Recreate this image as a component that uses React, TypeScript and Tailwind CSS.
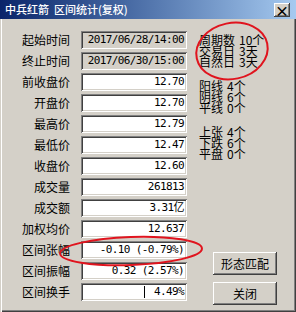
import React from "react";

const cjk = { fontFamily: '"Noto Sans CJK SC", "Noto Sans", sans-serif' };
const mono = { fontFamily: '"DejaVu Sans Mono", "Noto Sans CJK SC", monospace' };

const rows: { label: string; value: string; grey?: boolean; cursor?: boolean }[] = [
  { label: "起始时间", value: "2017/06/28/14:00", grey: true },
  { label: "终止时间", value: "2017/06/30/15:00", grey: true },
  { label: "前收盘价", value: "12.70" },
  { label: "开盘价", value: "12.70" },
  { label: "最高价", value: "12.79" },
  { label: "最低价", value: "12.47" },
  { label: "收盘价", value: "12.60" },
  { label: "成交量", value: "261813" },
  { label: "成交额", value: "3.31亿" },
  { label: "加权均价", value: "12.637" },
  { label: "区间张幅", value: "-0.10 (-0.79%)" },
  { label: "区间振幅", value: "0.32 (2.57%)" },
  { label: "区间换手", value: "4.49%", cursor: true },
];

const stats = [
  [
    ["周期数", "10个"],
    ["交易日", "3天"],
    ["自然日", "3天"],
  ],
  [
    ["阳线", "4个"],
    ["阴线", "6个"],
    ["平线", "0个"],
  ],
  [
    ["上张", "4个"],
    ["下跌", "6个"],
    ["平盘", "0个"],
  ],
];

function Field({ value, grey, cursor }: { value: string; grey?: boolean; cursor?: boolean }) {
  return (
    <div
      className={`flex h-[18px] w-[106px] items-center justify-end pr-[3px] text-[11px] tracking-[-0.6px] text-black shadow-[inset_1px_1px_#808080,inset_-1px_-1px_#ffffff,inset_2px_2px_#404040,inset_-2px_-2px_#d4d0c8] ${
        grey ? "bg-[#d4d0c8]" : "bg-white"
      }`}
      style={mono}
    >
      {cursor ? <span className="mr-[9px] h-[12px] w-px bg-black" /> : null}
      <span className="whitespace-pre">{value}</span>
    </div>
  );
}

function Button({ children }: { children: React.ReactNode }) {
  return (
    <div className="flex h-[23px] w-[64px] items-center justify-center bg-[#d4d0c8] text-[12px] text-black shadow-[inset_-1px_-1px_#404040,inset_1px_1px_#ffffff,inset_-2px_-2px_#808080,inset_2px_2px_#d4d0c8]">
      {children}
    </div>
  );
}

export default function App() {
  return (
    <div className="relative h-[312px] w-[296px] overflow-hidden bg-[#d4d0c8]" style={cjk}>
      <div className="flex h-[19px] items-center justify-between bg-gradient-to-r from-[#0a246a] to-[#a6caf0] pl-[5px] pr-[6px]">
        <span className="whitespace-pre text-[11px] font-medium leading-none text-white">中兵红箭  区间统计(复权)</span>
        <div className="flex h-[14px] w-[16px] items-center justify-center bg-[#d4d0c8] text-[14px] font-bold leading-none text-black shadow-[inset_-1px_-1px_#404040,inset_1px_1px_#ffffff,inset_-2px_-2px_#808080]">
          ×
        </div>
      </div>

      <div className="flex h-[293px] items-start pt-[12px] shadow-[inset_1px_0_#d4d0c8,inset_2px_0_#ffffff,inset_-1px_-1px_#404040,inset_-2px_-2px_#808080]">
        <div className="flex flex-col gap-[3px]">
          {rows.map((r) => (
            <div key={r.label} className="flex items-center gap-[11px]">
              <div className="w-[70px] text-right text-[12px] leading-none text-black">{r.label}</div>
              <Field value={r.value} grey={r.grey} cursor={r.cursor} />
            </div>
          ))}
        </div>

        <div className="ml-[12px] flex h-[274px] flex-col">
          <div className="flex flex-col gap-[13px] pt-[3px] text-[12px] leading-[11px] text-black">
            {stats.map((g, i) => (
              <div key={i} className="flex flex-col">
                {g.map(([k, v]) => (
                  <div key={k} className="flex gap-[4px]">
                    <span>{k}</span>
                    <span>{v}</span>
                  </div>
                ))}
              </div>
            ))}
          </div>
          <div className="mt-auto ml-[14px] flex flex-col gap-[7px]">
            <Button>形态匹配</Button>
            <Button>关闭</Button>
          </div>
        </div>
      </div>

      <svg className="pointer-events-none absolute left-0 top-0" width="296" height="312">
        <ellipse cx="232" cy="51" rx="36" ry="28" transform="rotate(-12 232 51)" fill="none" stroke="#e0141e" strokeWidth="2" />
        <ellipse cx="131" cy="251" rx="71" ry="14" transform="rotate(-2 131 251)" fill="none" stroke="#e0141e" strokeWidth="2" />
      </svg>
    </div>
  );
}
